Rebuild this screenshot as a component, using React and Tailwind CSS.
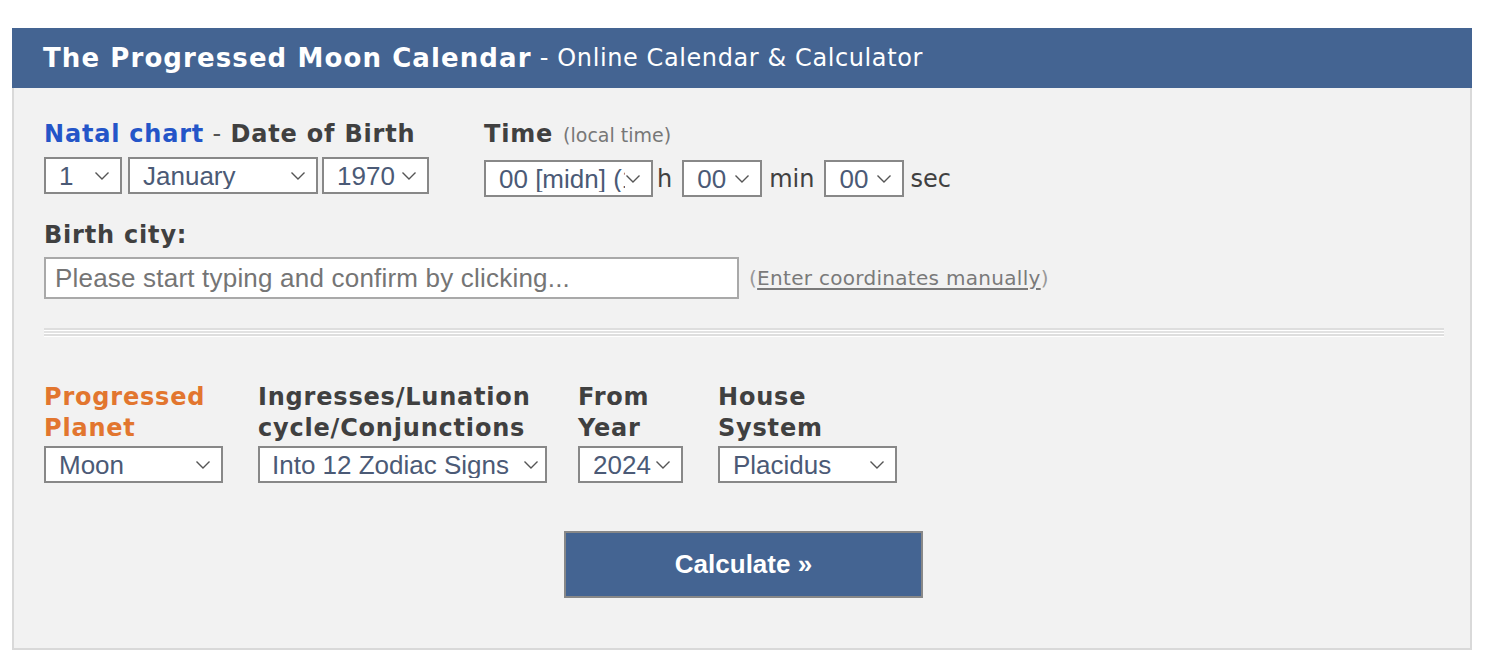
import React from "react";

const Chevron = () => (
  <svg width="16" height="10" viewBox="0 0 16 10" className="shrink-0">
    <path d="M1.5 1.5 L8 8 L14.5 1.5" fill="none" stroke="#555" strokeWidth="1.4" />
  </svg>
);

function Select({ value, width, pl = "pl-[13px]", pr = "pr-[10px]" }) {
  return (
    <div
      className={`flex h-[37px] items-center border-2 border-[#888] bg-white ${pl} ${pr} font-['Liberation_Sans',Arial,sans-serif] text-[26px] text-[#4b5a76]`}
      style={{ width }}
    >
      <span className="flex-1 overflow-hidden whitespace-nowrap leading-none">{value}</span>
      <Chevron />
    </div>
  );
}

const label = "font-['DejaVu_Sans',Verdana,sans-serif] font-bold text-[24px] tracking-[0.8px] text-[#404040]";

export default function App() {
  return (
    <div className="min-h-screen bg-white pl-[12px] pt-[28px]">
      <div className="w-[1460px]">
        <div className="flex h-[60px] items-center bg-[#446492] pl-[31px] font-['DejaVu_Sans',Verdana,sans-serif] text-white">
          <span className="text-[26px] font-bold tracking-[1.1px]">The Progressed Moon Calendar</span>
          <span className="text-[24px] tracking-[0.6px]">&nbsp;- Online Calendar &amp; Calculator</span>
        </div>

        <div className="h-[562px] border-x-2 border-b-2 border-[#d9d9d9] bg-[#f2f2f2] pl-[30px] pr-[26px] pt-[30px]">
          <div className="flex">
            <div>
              <div className={`${label} leading-[32px]`}>
                <span className="text-[#2455c8]">Natal chart</span>
                <span className="font-normal text-[#555]"> - </span>
                Date of Birth
              </div>
              <div className="mt-[7px] flex">
                <Select value="1" width={78} />
                <div className="ml-[6px]">
                  <Select value="January" width={190} />
                </div>
                <div className="ml-[4px]">
                  <Select value="1970" width={107} />
                </div>
              </div>
            </div>
            <div className="ml-[55px]">
              <div className="flex items-baseline leading-[32px]">
                <span className={label}>Time</span>
                <span className="ml-[10px] font-['DejaVu_Sans',Verdana,sans-serif] text-[19px] text-[#777]">(local time)</span>
              </div>
              <div className="mt-[9px] flex items-center font-['DejaVu_Sans',Verdana,sans-serif] text-[24px] text-[#404040]">
                <Select value="00 [midn] (12 a.m.)" width={169} />
                <span className="ml-[4px] mr-[10px]">h</span>
                <Select value="00" width={80} />
                <span className="ml-[7px] mr-[10px]">min</span>
                <Select value="00" width={80} />
                <span className="ml-[6px]">sec</span>
              </div>
            </div>
          </div>

          <div className={`${label} mt-[22px] leading-[32px] text-[23px]`}>Birth city:</div>
          <div className="mt-[6px] flex items-center">
            <div className="flex h-[42px] w-[695px] items-center border-2 border-[#a9a9a9] bg-white pl-[9px] font-['Liberation_Sans',Arial,sans-serif] text-[26px] tracking-[0.2px] text-[#757575]">
              Please start typing and confirm by clicking...
            </div>
            <span className="ml-[10px] font-['DejaVu_Sans',Verdana,sans-serif] text-[20px] tracking-[0.3px] text-[#999]">
              (<span className="text-[#7a7a7a] underline underline-offset-[3px]">Enter coordinates manually</span>)
            </span>
          </div>

          <div className="mt-[29px] w-[1400px]">
            <div className="h-[2px] bg-[#dedede]" />
            <div className="h-px bg-white" />
            <div className="h-[2px] bg-[#e2e2e2]" />
            <div className="h-px bg-white" />
            <div className="h-[2px] bg-[#dedede]" />
            <div className="h-px bg-white" />
          </div>

          <div className="mt-[45px] flex">
            <div className="w-[214px]">
              <div className={`${label} leading-[31px] text-[#e2762f]`}>
                Progressed
                <br />
                Planet
              </div>
              <div className="mt-[2px]">
                <Select value="Moon" width={179} />
              </div>
            </div>
            <div className="w-[320px]">
              <div className={`${label} leading-[31px]`}>
                Ingresses/Lunation
                <br />
                cycle/Conjunctions
              </div>
              <div className="mt-[2px]">
                <Select value="Into 12 Zodiac Signs" width={289} pl="pl-[12px]" pr="pr-[6px]" />
              </div>
            </div>
            <div className="w-[140px]">
              <div className={`${label} leading-[31px]`}>
                From
                <br />
                Year
              </div>
              <div className="mt-[2px]">
                <Select value="2024" width={105} />
              </div>
            </div>
            <div>
              <div className={`${label} leading-[31px]`}>
                House
                <br />
                System
              </div>
              <div className="mt-[2px]">
                <Select value="Placidus" width={179} />
              </div>
            </div>
          </div>

          <div className="mt-[48px] flex pl-[520px]">
            <button className="h-[67px] w-[359px] border-2 border-[#888] bg-[#446492] font-['Liberation_Sans',Arial,sans-serif] text-[26px] font-bold text-white">
              Calculate »
            </button>
          </div>
        </div>
      </div>
    </div>
  );
}
